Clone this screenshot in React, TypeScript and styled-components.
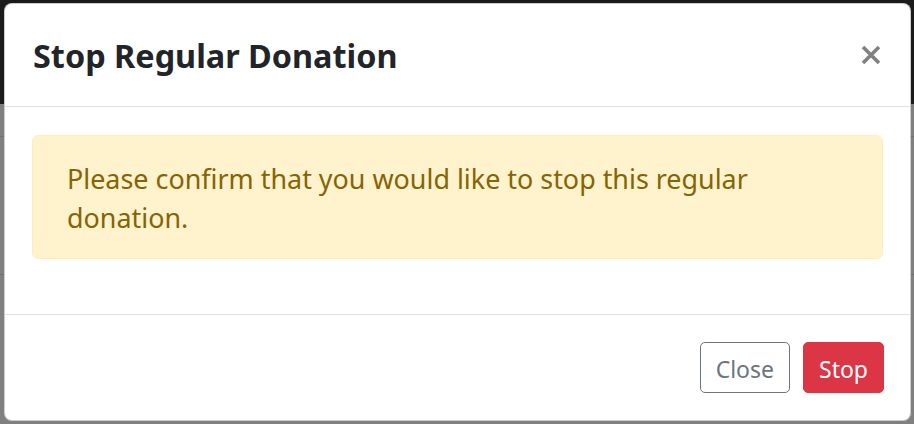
import React, { ReactElement } from "react"
import styled, { createGlobalStyle } from "styled-components"

const GlobalStyle = createGlobalStyle`
  html, body {
    margin: 0;
    padding: 0;
    width: 914px;
    height: 424px;
    overflow: hidden;
    font-family: "Noto Sans", "Open Sans", sans-serif;
  }
`

// page behind the backdrop, already darkened
const Page = styled.div`
  position: relative;
  width: 914px;
  height: 424px;
  background: #808080;
  display: flex;
  flex-direction: column;
`

const NavBand = styled.div`
  height: 104px;
  background: #1b1b1b;
  flex-shrink: 0;
`

const PageRow = styled.div<{ $h: number }>`
  height: ${(p) => p.$h}px;
  border-bottom: 1px solid #6f6f6f;
  flex-shrink: 0;
`

const ModalContent = styled.div`
  position: absolute;
  top: 3px;
  left: 4px;
  width: 907px;
  height: 418px;
  box-sizing: border-box;
  background: #fff;
  border: 1px solid rgba(0, 0, 0, 0.2);
  border-radius: 8px;
  display: flex;
  flex-direction: column;
  overflow: hidden;
`

const Header = styled.div`
  display: flex;
  align-items: center;
  justify-content: space-between;
  height: 103px;
  box-sizing: border-box;
  padding: 0 28px 0 28px;
  border-bottom: 1px solid #dee2e6;
`

const Title = styled.h5`
  margin: 0;
  font-size: 32.4px;
  font-weight: 700;
  line-height: 46px;
  color: #212529;
`

const CloseX = styled.button`
  border: 0;
  background: transparent;
  padding: 0;
  margin: 0 1px 0 0;
  width: 20px;
  height: 20px;
  display: flex;
  color: #808080;
  cursor: pointer;
`

const Body = styled.div`
  flex: 1;
  padding: 28px 27px;
`

const Alert = styled.div`
  background: #fff3cd;
  border: 1px solid #ffeeba;
  border-radius: 6px;
  color: #856404;
  font-size: 26.9px;
  line-height: 39px;
  padding: 23px 34px 21px;
`

const Footer = styled.div`
  display: flex;
  justify-content: flex-end;
  align-items: center;
  gap: 13px;
  height: 106px;
  box-sizing: border-box;
  padding: 0 26px 0;
  border-top: 1px solid #dee2e6;
`

const Button = styled.button<{ $variant: "outline" | "danger" }>`
  font-family: "Noto Sans", "Open Sans", sans-serif;
  font-size: 23px;
  line-height: 33px;
  height: 51px;
  box-sizing: border-box;
  padding: 3px 15px 0;
  border-radius: 5px;
  border: 1px solid ${(p) => (p.$variant === "danger" ? "#dc3545" : "#6c757d")};
  background: ${(p) => (p.$variant === "danger" ? "#dc3545" : "#fff")};
  color: ${(p) => (p.$variant === "danger" ? "#fff" : "#6c757d")};
  cursor: pointer;
`

function App(): ReactElement {
  return (
    <>
      <GlobalStyle />
      <Page>
        <NavBand />
        <PageRow $h={32} />
        <PageRow $h={137} />
        <PageRow $h={150} />
        <ModalContent>
          <Header>
            <Title>Stop Regular Donation</Title>
            <CloseX aria-label="Close">
              <svg width="20" height="20" viewBox="0 0 20 20">
                <path
                  d="M2 2 L18 18 M18 2 L2 18"
                  stroke="currentColor"
                  strokeWidth="3.6"
                  strokeLinecap="butt"
                />
              </svg>
            </CloseX>
          </Header>
          <Body>
            <Alert>
              Please confirm that you would like to stop this regular donation.
            </Alert>
          </Body>
          <Footer>
            <Button $variant="outline">Close</Button>
            <Button $variant="danger">Stop</Button>
          </Footer>
        </ModalContent>
      </Page>
    </>
  )
}

export default App
